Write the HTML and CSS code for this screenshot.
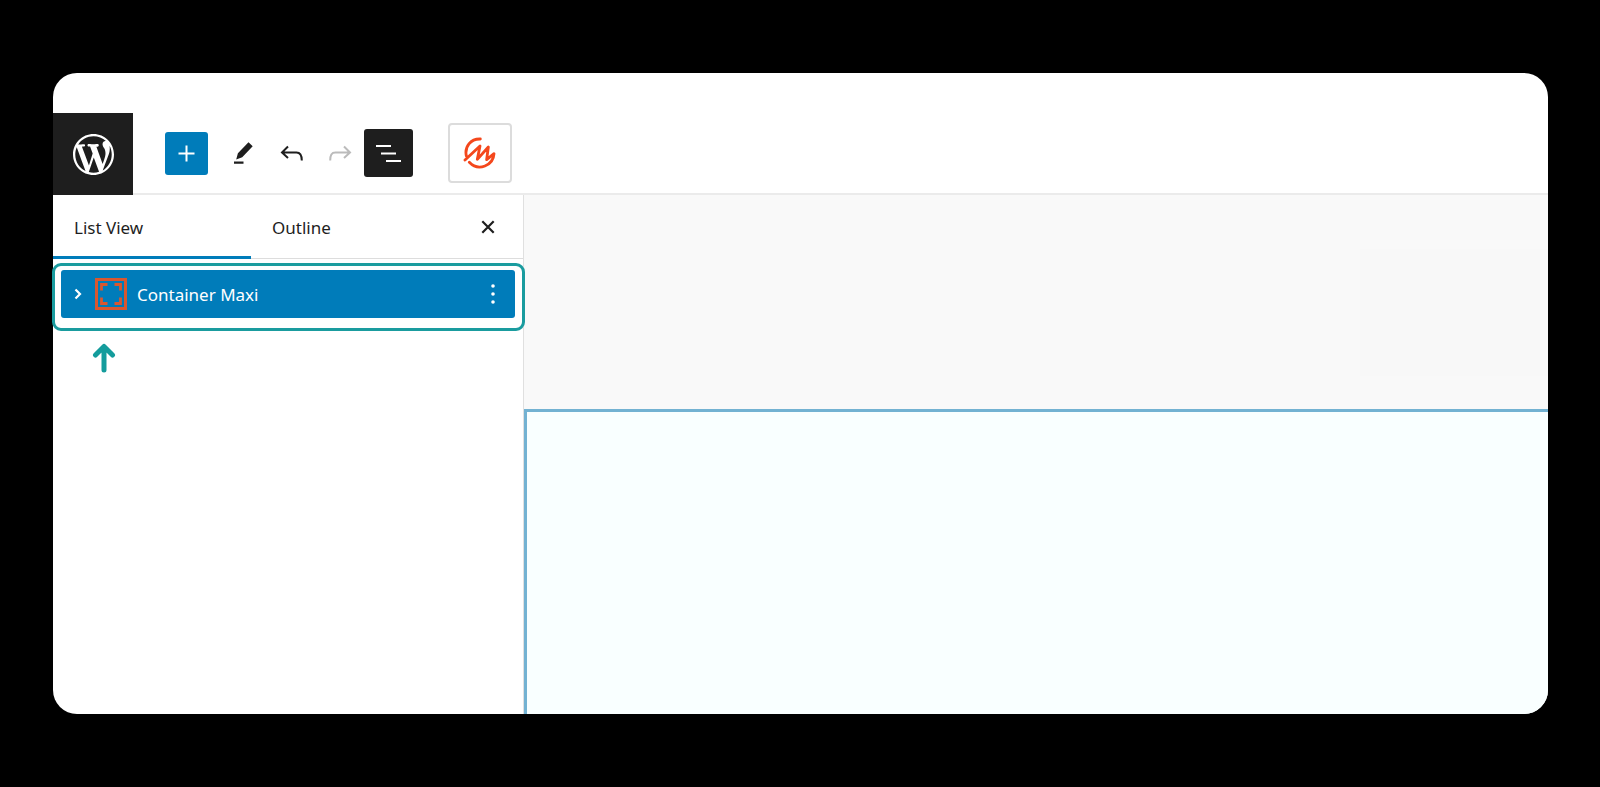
FILE: index.html
```html
<!DOCTYPE html>
<html lang="en">
<head>
<meta charset="utf-8">
<title>Block editor</title>
<link rel="stylesheet" href="styles.css">
</head>
<body>
<main class="editor">
  <header class="topbar">
    <a class="home" href="#" aria-label="WordPress">
      <svg width="41" height="41" viewBox="0 0 20 20" fill="currentColor"><path d="M20 10c0-5.51-4.49-10-10-10C4.48 0 0 4.49 0 10c0 5.52 4.48 10 10 10 5.51 0 10-4.48 10-10zM7.78 15.37L4.37 6.22c.55-.02 1.17-.08 1.17-.08.5-.06.44-1.13-.06-1.11 0 0-1.45.11-2.37.11-.18 0-.37 0-.58-.01C4.12 2.69 6.87 1.11 10 1.11c2.33 0 4.45.87 6.05 2.34-.68-.11-1.65.39-1.65 1.58 0 .74.45 1.36.9 2.1.35.61.55 1.36.55 2.46 0 1.49-1.4 5-1.4 5l-3.03-8.37c.54-.02.82-.17.82-.17.5-.05.44-1.25-.06-1.22 0 0-1.44.12-2.38.12-.87 0-2.33-.12-2.33-.12-.5-.03-.56 1.2-.06 1.22l.92.08 1.26 3.41zM17.41 10c.24-.64.74-1.87.43-4.25.7 1.29 1.05 2.71 1.05 4.25 0 3.29-1.73 6.24-4.4 7.78.97-2.59 1.94-5.2 2.92-7.78zM6.1 18.09C3.12 16.65 1.11 13.53 1.11 10c0-1.3.23-2.48.72-3.59C3.25 10.3 4.67 14.2 6.1 18.09zm4.03-6.63l2.58 6.98c-.86.29-1.76.45-2.71.45-.79 0-1.57-.11-2.29-.33.81-2.38 1.62-4.74 2.42-7.1z"/></svg>
    </a>
    <div class="tools">
      <button class="add" type="button" aria-label="Add block">
        <svg width="43" height="43" viewBox="0 0 43 43" fill="none" stroke="currentColor" stroke-width="2"><path d="M21.5 13.5v16M13.5 21.5h16"/></svg>
      </button>
      <button class="tool" type="button" aria-label="Edit">
        <svg width="48" height="48" viewBox="0 0 48 48" fill="currentColor"><path d="M28.5 13.200l4.200 4-10.500 11-6 2.300 1.700-6.300zM14 32.500h9.500v2.200H14z"/></svg>
      </button>
      <button class="tool" type="button" aria-label="Undo">
        <svg width="48" height="48" viewBox="0 0 48 48" fill="none" stroke="currentColor" stroke-width="2"><path d="M20 17.500L14 23.500l6 5.500M14 23.500H28.500c4 0 5.300 2.500 5.300 8"/></svg>
      </button>
      <button class="tool" type="button" aria-label="Redo" disabled>
        <svg width="48" height="48" viewBox="0 0 48 48" fill="none" stroke="currentColor" stroke-width="2"><path d="M28 17.500l6 6-6 5.500M34 23.500H19.500c-4 0-5.300 2.500-5.300 8"/></svg>
      </button>
      <button class="tool pressed" type="button" aria-label="List View" aria-pressed="true">
        <svg width="49" height="48" viewBox="0 0 49 48" fill="currentColor"><path d="M12 16h15v2H12zM17 23.500h15v2H17zM22 31h15v2H22z"/></svg>
      </button>
    </div>
    <button class="maxi" type="button" aria-label="Maxi templates">
      <svg width="34" height="34" viewBox="100 79 102 102" fill="none" stroke="currentColor" stroke-width="8.500" stroke-linecap="round" stroke-linejoin="round"><path d="M152 88C123 87 104 111 110 139M106 151L151 109 143 149 176 112 171 150 193 132C191 167 147 187 119 158"/></svg>
    </button>
  </header>
  <div class="body">
    <aside class="sidebar">
      <div class="tabs">
        <button class="tab active" type="button">List View</button>
        <button class="tab" type="button">Outline</button>
        <button class="close" type="button" aria-label="Close">
          <svg width="24" height="24" viewBox="0 0 24 24" fill="none" stroke="currentColor" stroke-width="2.200"><path d="M6.300 6.300l11.400 11.400M17.700 6.300L6.300 17.700"/></svg>
        </button>
      </div>
      <div class="highlight">
        <div class="row">
          <button class="expand" type="button" aria-label="Expand">
            <svg width="10" height="14" viewBox="0 0 10 14" fill="none" stroke="currentColor" stroke-width="2.200"><path d="M2.500 2.500L7 7l-4.500 4.500"/></svg>
          </button>
          <a class="block" href="#">
            <svg class="block-icon" width="32" height="32" viewBox="0 0 32 32" fill="none" stroke="currentColor"><path stroke-width="3" d="M1.500 1.500h29v29h-29z"/><path stroke-width="2.800" d="M6.500 12.500v-6h6M19.500 6.500h6v6M25.500 19.500v6h-6M12.500 25.500h-6v-6"/></svg>
            <span class="block-name">Container Maxi</span>
          </a>
          <button class="more" type="button" aria-label="Options">
            <svg width="8" height="24" viewBox="0 0 8 24" fill="currentColor"><circle cx="4" cy="4" r="1.800"/><circle cx="4" cy="12" r="1.800"/><circle cx="4" cy="20" r="1.800"/></svg>
          </button>
        </div>
      </div>
      <svg class="pointer" width="24" height="30" viewBox="0 0 24 30" fill="none" stroke="currentColor" stroke-width="5" stroke-linecap="round" stroke-linejoin="round"><path d="M12 27V4M3.500 12L12 3.500 20.500 12"/></svg>
    </aside>
    <section class="canvas">
      <div class="title-area"><div class="placeholder"></div></div>
      <div class="container-block"></div>
    </section>
  </div>
</main>
</body>
</html>
```
FILE: styles.css
```css
* { box-sizing: border-box; }
body {
  margin: 0;
  min-height: 100vh;
  padding: 73px 52px 73px 53px;
  display: flex;
  background: #000;
  color: #1e1e1e;
  font-family: "Noto Sans", "Open Sans", sans-serif;
  font-size: 17px;
  line-height: 24px;
}
button {
  margin: 0;
  padding: 0;
  border: 0;
  background: none;
  color: inherit;
  font: inherit;
}
a { color: inherit; text-decoration: none; }
svg { display: block; flex: none; }
.editor {
  flex: 1;
  display: flex;
  flex-direction: column;
  background: #fff;
  border-radius: 24px;
}
.topbar {
  display: flex;
  align-items: center;
  margin-top: 40px;
  background: linear-gradient(#ebebeb, #ebebeb) bottom / 100% 2px no-repeat;
}
.home {
  display: grid;
  place-items: center;
  width: 80px;
  height: 82px;
  background: #1e1e1e;
  color: #fff;
}
.tools {
  display: flex;
  align-items: center;
  margin: 0 0 2px 32px;
}
.add {
  margin-right: 12px;
  border-radius: 3px;
  background: #007cba;
  color: #fff;
}
.tool { border-radius: 3px; }
.tool:disabled { color: #bbb; }
.pressed { background: #1e1e1e; color: #fff; }
.maxi {
  display: grid;
  place-items: center;
  width: 64px;
  height: 60px;
  margin: 0 0 2px 35px;
  border: 2px solid #dcdcdc;
  border-radius: 4px;
  color: #f4471c;
}
.body { flex: 1; display: flex; }
.sidebar { width: 471px; border-right: 1px solid #e0e0e0; }
.tabs {
  display: flex;
  height: 64px;
  border-bottom: 1px solid #ddd;
}
.tab {
  width: 198px;
  height: 64px;
  padding: 2px 21px 0;
  text-align: left;
}
.active { border-bottom: 3px solid #007cba; padding-top: 5px; }
.close { margin: 0 23px 0 auto; }
.highlight {
  position: relative;
  z-index: 1;
  margin: 4px -2px 0 -1px;
  padding: 4px 7px 10px 6px;
  border: 3px solid #1a9c9f;
  border-radius: 9px;
}
.row {
  display: flex;
  align-items: center;
  height: 48px;
  padding: 0 18px 0 12px;
  border-radius: 3px;
  background: #007cba;
  color: #fff;
}
.block {
  flex: 1;
  display: flex;
  align-items: center;
  gap: 10px;
  margin-left: 12px;
}
.block-icon { color: #d9572f; }
.block-name { padding-top: 2px; }
.pointer { margin: 12px 0 0 39px; color: #149c9c; }
.canvas {
  flex: 1;
  display: flex;
  flex-direction: column;
  border-bottom-right-radius: 24px;
  overflow: hidden;
}
.title-area {
  height: 214px;
  padding-top: 54px;
  background: #f9f9f9;
}
.placeholder {
  width: 188px;
  height: 127px;
  margin-left: auto;
  background: #f8f8f8;
}
.container-block {
  flex: 1;
  border: solid #73b2d2;
  border-width: 3px 0 0 3px;
  background: #f9ffff;
}
```
